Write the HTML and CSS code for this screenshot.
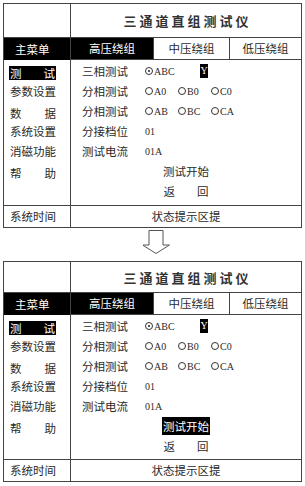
FILE: index.html
```html
<!DOCTYPE html>
<html lang="zh">
<head>
  <meta charset="UTF-8" />
  <meta name="viewport" content="width=device-width, initial-scale=1.0"/>
  <title>三通道直组测试仪</title>
  <link rel="stylesheet" href="styles.css">
</head>
<body>

  <div class="panel">
    <div class="corner"></div>
    <div class="title">三通道直组测试仪</div>
    <div class="menu-head">主菜单</div>
    <div class="tabs">
      <span class="tab on">高压绕组</span>
      <span class="tab">中压绕组</span>
      <span class="tab">低压绕组</span>
    </div>
    <ul class="menu">
      <li><span class="spread hi"><i>测</i><i>试</i></span></li>
      <li>参数设置</li>
      <li><span class="spread"><i>数</i><i>据</i></span></li>
      <li>系统设置</li>
      <li>消磁功能</li>
      <li><span class="spread"><i>帮</i><i>助</i></span></li>
    </ul>
    <div class="form">
      <div class="row"><span class="label">三相测试</span><span class="opt first"><b class="radio on"></b>ABC</span><span class="ybox">Y</span></div>
      <div class="row"><span class="label">分相测试</span><span class="opt"><b class="radio"></b>A0</span><span class="opt"><b class="radio"></b>B0</span><span class="opt"><b class="radio"></b>C0</span></div>
      <div class="row"><span class="label">分相测试</span><span class="opt"><b class="radio"></b>AB</span><span class="opt"><b class="radio"></b>BC</span><span class="opt"><b class="radio"></b>CA</span></div>
      <div class="row"><span class="label">分接档位</span><span class="val">01</span></div>
      <div class="row"><span class="label">测试电流</span><span class="val">01A</span></div>
      <div class="row center"><span class="action">测试开始</span></div>
      <div class="row center"><span class="spread wide"><i>返</i><i>回</i></span></div>
    </div>
    <div class="clock">系统时间</div>
    <div class="status">状态提示区提</div>
  </div>

  <div class="arrow">
    <svg width="28" height="25" viewBox="0 0 28 25">
      <polygon points="6,0.5 20,0.5 20,15 26.5,15 13,23.5 -0.5,15 6,15" fill="#fff" stroke="#555" stroke-width="1"/>
    </svg>
  </div>

  <div class="panel second">
    <div class="corner"></div>
    <div class="title">三通道直组测试仪</div>
    <div class="menu-head">主菜单</div>
    <div class="tabs">
      <span class="tab on">高压绕组</span>
      <span class="tab">中压绕组</span>
      <span class="tab">低压绕组</span>
    </div>
    <ul class="menu">
      <li><span class="spread hi"><i>测</i><i>试</i></span></li>
      <li>参数设置</li>
      <li><span class="spread"><i>数</i><i>据</i></span></li>
      <li>系统设置</li>
      <li>消磁功能</li>
      <li><span class="spread"><i>帮</i><i>助</i></span></li>
    </ul>
    <div class="form">
      <div class="row"><span class="label">三相测试</span><span class="opt first"><b class="radio on"></b>ABC</span><span class="ybox">Y</span></div>
      <div class="row"><span class="label">分相测试</span><span class="opt"><b class="radio"></b>A0</span><span class="opt"><b class="radio"></b>B0</span><span class="opt"><b class="radio"></b>C0</span></div>
      <div class="row"><span class="label">分相测试</span><span class="opt"><b class="radio"></b>AB</span><span class="opt"><b class="radio"></b>BC</span><span class="opt"><b class="radio"></b>CA</span></div>
      <div class="row"><span class="label">分接档位</span><span class="val">01</span></div>
      <div class="row"><span class="label">测试电流</span><span class="val">01A</span></div>
      <div class="row center"><span class="action hi">测试开始</span></div>
      <div class="row center"><span class="spread wide"><i>返</i><i>回</i></span></div>
    </div>
    <div class="clock">系统时间</div>
    <div class="status">状态提示区提</div>
  </div>

</body>
</html>
```

FILE: styles.css
```css
* {
  box-sizing: border-box;
  margin: 0;
  padding: 0;
}
body {
  background: #fff;
  color: #2a2a2a;
  font-family: "Noto Sans CJK SC", "Noto Sans", sans-serif;
  font-size: 11.5px;
  padding: 3px 0 0 3px;
}
.panel {
  display: grid;
  grid-template-columns: 67px 1fr;
  grid-template-rows: 34px 22px auto 22px;
  width: 299px;
  border: 1px solid #444;
}
.panel.second {
  grid-template-rows: 31px 22px auto 22px;
}
.corner, .menu-head, .menu, .clock {
  border-right: 1px solid #444;
}
.corner, .title {
  border-bottom: 1px solid #444;
}
.title {
  display: flex;
  align-items: center;
  justify-content: center;
  font-size: 13px;
  font-weight: bold;
  letter-spacing: 3px;
  color: #333;
  padding-left: 3px;
}
.menu-head {
  background: #000;
  color: #fff;
  line-height: 22px;
  padding-left: 11px;
}
.tabs {
  display: grid;
  grid-template-columns: 82px 76px 1fr;
  border-bottom: 1px solid #444;
}
.tab {
  text-align: center;
  line-height: 21px;
  border-left: 1px solid #444;
}
.tab.on {
  background: #000;
  color: #fff;
  border-left: 0;
}
.menu {
  list-style: none;
  padding: 1px 0 0 6px;
}
.menu li {
  height: 20px;
  line-height: 20px;
}
.spread {
  display: inline-flex;
  justify-content: space-between;
  width: 46px;
  line-height: 14px;
  vertical-align: middle;
}
.spread i {
  font-style: normal;
}
.hi {
  background: #000;
  color: #fff;
}
.menu .hi {
  width: 47px;
  margin-left: -1px;
  padding: 0 1px;
}
.form {
  padding: 1px 0 4px 11px;
}
.second .form {
  padding-bottom: 3px;
}
.row {
  display: flex;
  align-items: center;
  height: 20px;
}
.row.center {
  justify-content: center;
  padding-right: 11px;
}
.label {
  width: 63px;
}
.opt, .val, .ybox {
  font-family: "Liberation Serif", serif;
  font-size: 10px;
}
.opt {
  display: inline-flex;
  align-items: center;
  width: 33px;
}
.opt.first {
  width: 55px;
}
.radio {
  display: inline-block;
  width: 8px;
  height: 8px;
  border: 1px solid #333;
  border-radius: 50%;
  margin-right: 1px;
  position: relative;
}
.radio.on::after {
  content: "";
  position: absolute;
  left: 2px;
  top: 2px;
  width: 2px;
  height: 2px;
  background: #222;
  border-radius: 50%;
}
.ybox {
  background: #000;
  color: #fff;
  width: 8px;
  height: 14px;
  line-height: 14px;
  text-align: center;
}
.action {
  line-height: 18px;
  padding: 0 1px;
}
.spread.wide {
  width: 45px;
}
.clock {
  border-top: 1px solid #444;
  line-height: 20px;
  padding-left: 6px;
}
.status {
  border-top: 1px solid #444;
  line-height: 20px;
  text-align: center;
}
.arrow {
  height: 33px;
  padding: 2px 0 0 140px;
}
.arrow svg {
  display: block;
}
```
